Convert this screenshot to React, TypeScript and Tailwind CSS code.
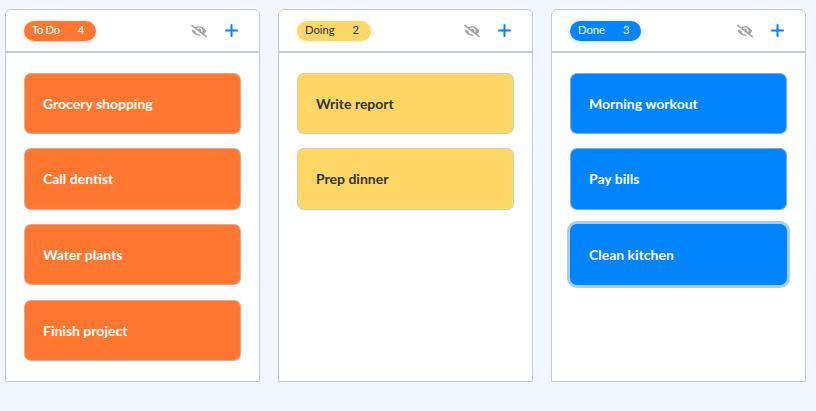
import { FaEyeSlash } from "react-icons/fa";
import { Plus } from "lucide-react";

type Column = {
    title: string;
    pill: string;
    card: string;
    items: string[];
};

const columns: Column[] = [
    {
        title: "To Do",
        pill: "bg-[#ff7730] text-white tracking-[-0.3px] shadow-[0_1px_4px_rgba(255,119,48,0.3)]",
        card: "bg-[#ff7730] text-white",
        items: ["Grocery shopping", "Call dentist", "Water plants", "Finish project"],
    },
    {
        title: "Doing",
        pill: "bg-[#ffd766] text-[#333333] shadow-[0_1px_4px_rgba(255,215,102,0.4)]",
        card: "bg-[#ffd766] text-[#333333]",
        items: ["Write report", "Prep dinner"],
    },
    {
        title: "Done",
        pill: "bg-[#0084ff] text-white shadow-[0_1px_4px_rgba(0,132,255,0.25)]",
        card: "bg-[#0084ff] text-white",
        items: ["Morning workout", "Pay bills", "Clean kitchen"],
    },
];

function Board({ column }: { column: Column }) {
    return (
        <div className="w-[255px] h-[373px] flex flex-col bg-white border border-[#c3c9d8] rounded-t-[6px]">
            <div className="h-[43px] shrink-0 flex items-center pl-[18px] pr-[18.5px] border-b-2 border-[#c5cad9]">
                <div className={`h-[20px] flex items-center gap-[18px] pl-[8px] pr-[12px] rounded-full text-[11.2px] ${column.pill}`}>
                    <span>{column.title}</span>
                    <span>{column.items.length}</span>
                </div>
                <FaEyeSlash className="ml-auto w-[16px] h-[16px] text-[#a3a3a3]" />
                <Plus className="ml-[14.5px] w-[19px] h-[19px] text-[#0084ff]" strokeWidth={2.5} />
            </div>
            <div className="flex flex-col gap-[14.2px] pt-[19.5px] pl-[18px] pr-[18px]">
                {column.items.map((item) => (
                    <div
                        key={item}
                        className={`h-[61.5px] flex items-center pl-[18px] rounded-[7px] border border-[rgba(200,200,210,0.6)] text-[14px] font-bold ${column.card} ${
                            item === "Clean kitchen" ? "shadow-[0_0_0_3px_#a9cdec] border-transparent" : ""
                        }`}
                    >
                        {item}
                    </div>
                ))}
            </div>
        </div>
    );
}

export default function App() {
    return (
        <div className="w-[816px] h-[411px] bg-[#f2f6ff] flex gap-[18px] pt-[9px] pl-[5px] font-['Lato',sans-serif]">
            {columns.map((column) => (
                <Board key={column.title} column={column} />
            ))}
        </div>
    );
}
